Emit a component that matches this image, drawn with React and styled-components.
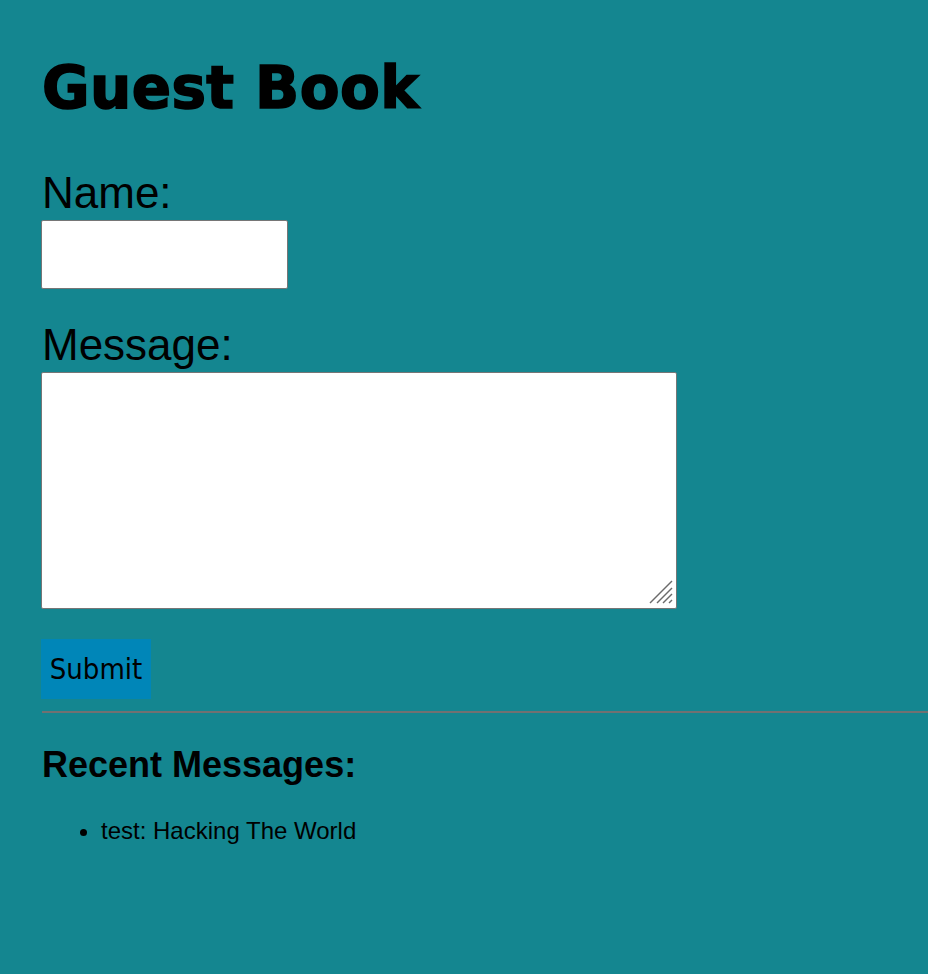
import { useState } from "react";
import styled, { createGlobalStyle } from "styled-components";

const GlobalStyle = createGlobalStyle`
    html, body {
        margin: 0;
        padding: 0;
        background-color: #148690;
    }
    body {
        font-family: "Liberation Sans", Arial, sans-serif;
        font-size: 24px;
        color: #000000;
    }
`

export default function App() {
    const [name, setName] = useState("");
    const [message, setMessage] = useState("");
    const messages = [{ name: "test", text: "Hacking The World" }];

    return (
        <PageContainer>
            <GlobalStyle />
            <Title>Guest Book</Title>

            <GuestForm onSubmit={e => e.preventDefault()}>
                <FieldLabel htmlFor="name">Name:</FieldLabel>
                <NameInput id="name" value={name} onChange={e => setName(e.target.value)} />

                <FieldLabel htmlFor="message" spaced>Message:</FieldLabel>
                <AreaWrap>
                    <MessageArea id="message" value={message} onChange={e => setMessage(e.target.value)} />
                    <Grip width="24" height="24" viewBox="0 0 24 24">
                        <line x1="1" y1="23" x2="23" y2="1" />
                        <line x1="8" y1="23" x2="23" y2="8" />
                        <line x1="14" y1="23" x2="23" y2="14" />
                        <line x1="20" y1="23" x2="23" y2="20" />
                    </Grip>
                </AreaWrap>

                <SubmitButton type="submit">Submit</SubmitButton>
            </GuestForm>

            <Divider />

            <SectionTitle>Recent Messages:</SectionTitle>
            <MessageList>
                {messages.map((m, i) => (
                    <li key={i}>{m.name}: {m.text}</li>
                ))}
            </MessageList>
        </PageContainer>
    )
}

const PageContainer = styled.div`
    display: flex;
    flex-direction: column;
    align-items: stretch;
    padding: 54px 0 60px 41px;
    min-height: 974px;
    box-sizing: border-box;
`
const Title = styled.h1`
    margin: 0 0 0 1px;
    font-family: "DejaVu Sans", Verdana, sans-serif;
    font-weight: 700;
    font-size: 58px;
    line-height: 68px;
    -webkit-text-stroke: 1.6px #000000;
    letter-spacing: 0.4px;
`
const GuestForm = styled.form`
    display: flex;
    flex-direction: column;
    align-items: flex-start;
    margin-top: 46px;
`
const FieldLabel = styled.label`
    display: block;
    font-size: 44px;
    line-height: 50px;
    margin-top: ${props => props.spaced ? "31px" : "0"};
    margin-left: 1px;
    margin-bottom: 2px;
`
const NameInput = styled.input`
    box-sizing: border-box;
    width: 247px;
    height: 69px;
    margin: 0;
    border: 1px solid #767676;
    border-radius: 2px;
    background-color: #ffffff;
    font-size: 24px;
    padding: 4px 8px;
`
const AreaWrap = styled.div`
    position: relative;
    display: flex;
`
const MessageArea = styled.textarea`
    box-sizing: border-box;
    width: 636px;
    height: 237px;
    margin: 0;
    border: 1px solid #767676;
    border-radius: 2px;
    background-color: #ffffff;
    font-size: 20px;
    padding: 4px;
    resize: none;
`
const Grip = styled.svg`
    position: absolute;
    right: 4px;
    bottom: 5px;
    pointer-events: none;
    line {
        stroke: #6b6b6b;
        stroke-width: 1.5;
    }
`
const SubmitButton = styled.button`
    margin-top: 30px;
    height: 60px;
    width: 110px;
    padding: 0;
    border: none;
    border-radius: 0;
    background-color: #0086b8;
    color: #000000;
    font-family: "DejaVu Sans Condensed", "DejaVu Sans", Tahoma, sans-serif;
    font-size: 29px;
    text-align: center;
    cursor: pointer;
`
const Divider = styled.hr`
    width: 100%;
    height: 0;
    margin: 12px 0 0 1px;
    border: none;
    border-top: 2px solid #717171;
`
const SectionTitle = styled.h2`
    margin: 31px 0 0 1px;
    font-size: 36px;
    line-height: 41px;
    font-weight: 700;
`
const MessageList = styled.ul`
    margin: 32px 0 0 0;
    padding-left: 60px;
    li {
        font-size: 24px;
        line-height: 28px;
    }
`
